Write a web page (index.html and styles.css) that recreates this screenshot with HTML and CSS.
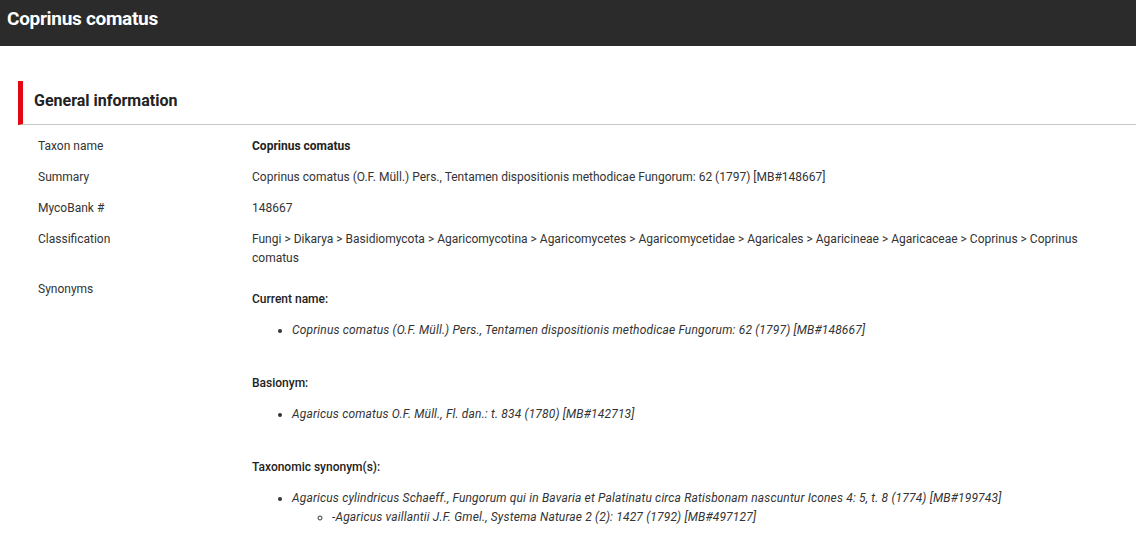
FILE: index.html
```html
<!DOCTYPE html>
<html lang="en">
<head>
    <meta charset="UTF-8">
    <meta name="viewport" content="width=device-width, initial-scale=1.0">
    <title>Coprinus comatus</title>
    <link rel="stylesheet" href="styles.css">
</head>
<body>
    <header class="topbar">
        <h1>Coprinus comatus</h1>
    </header>

    <section class="panel">
        <h2 class="panel-title">General information</h2>
        <div class="info">
            <div class="row">
                <div class="label">Taxon name</div>
                <div class="value"><strong>Coprinus comatus</strong></div>
            </div>
            <div class="row">
                <div class="label">Summary</div>
                <div class="value">Coprinus comatus (O.F. Müll.) Pers., Tentamen dispositionis methodicae Fungorum: 62 (1797) [MB#148667]</div>
            </div>
            <div class="row">
                <div class="label">MycoBank #</div>
                <div class="value">148667</div>
            </div>
            <div class="row">
                <div class="label">Classification</div>
                <div class="value">Fungi &gt; Dikarya &gt; Basidiomycota &gt; Agaricomycotina &gt; Agaricomycetes &gt; Agaricomycetidae &gt; Agaricales &gt; Agaricineae &gt; Agaricaceae &gt; Coprinus &gt; Coprinus comatus</div>
            </div>
            <div class="row">
                <div class="label">Synonyms</div>
                <div class="value synonyms">
                    <p class="syn-head">Current name:</p>
                    <ul>
                        <li>Coprinus comatus (O.F. Müll.) Pers., Tentamen dispositionis methodicae Fungorum: 62 (1797) [MB#148667]</li>
                    </ul>
                    <p class="syn-head">Basionym:</p>
                    <ul>
                        <li>Agaricus comatus O.F. Müll., Fl. dan.: t. 834 (1780) [MB#142713]</li>
                    </ul>
                    <p class="syn-head">Taxonomic synonym(s):</p>
                    <ul>
                        <li>Agaricus cylindricus Schaeff., Fungorum qui in Bavaria et Palatinatu circa Ratisbonam nascuntur Icones 4: 5, t. 8 (1774) [MB#199743]
                            <ul>
                                <li>-Agaricus vaillantii J.F. Gmel., Systema Naturae 2 (2): 1427 (1792) [MB#497127]</li>
                            </ul>
                        </li>
                    </ul>
                </div>
            </div>
        </div>
    </section>
</body>
</html>
```

FILE: styles.css
```css
body {
    margin: 0;
    font-family: Roboto, 'Liberation Sans', sans-serif;
    font-size: 12px;
    color: #333333;
    background: #ffffff;
}
.topbar {
    height: 46px;
    background-color: #2b2b2b;
    box-sizing: border-box;
    padding: 8px 7px 0;
}
.topbar h1 {
    margin: 0;
    font-size: 19px;
    line-height: 22px;
    font-weight: 700;
    color: #ffffff;
    letter-spacing: -0.3px;
}
.panel {
    margin: 35px 0 0 18px;
}
.panel-title {
    margin: 0;
    height: 44px;
    box-sizing: border-box;
    border-left: 5px solid #e30613;
    border-bottom: 1px solid #c8c8c8;
    padding: 10px 0 0 11px;
    font-size: 16px;
    line-height: 19px;
    font-weight: 700;
    color: #222222;
}
.info {
    padding: 6px 0 0 20px;
}
.row {
    display: flex;
    padding: 6px 0;
    line-height: 19px;
}
.label {
    width: 214px;
    flex-shrink: 0;
}
.value {
    flex: 1;
    padding-right: 40px;
}
.value strong {
    font-weight: 700;
    color: #222222;
}
.synonyms {
    padding-top: 10px;
}
.syn-head {
    margin: 0;
    font-weight: 500;
    color: #222222;
}
.synonyms ul {
    margin: 12px 0 34px;
    padding-left: 40px;
    font-style: italic;
    letter-spacing: 0.16px;
}
.synonyms ul ul {
    margin: 0;
    list-style-type: circle;
}
```
